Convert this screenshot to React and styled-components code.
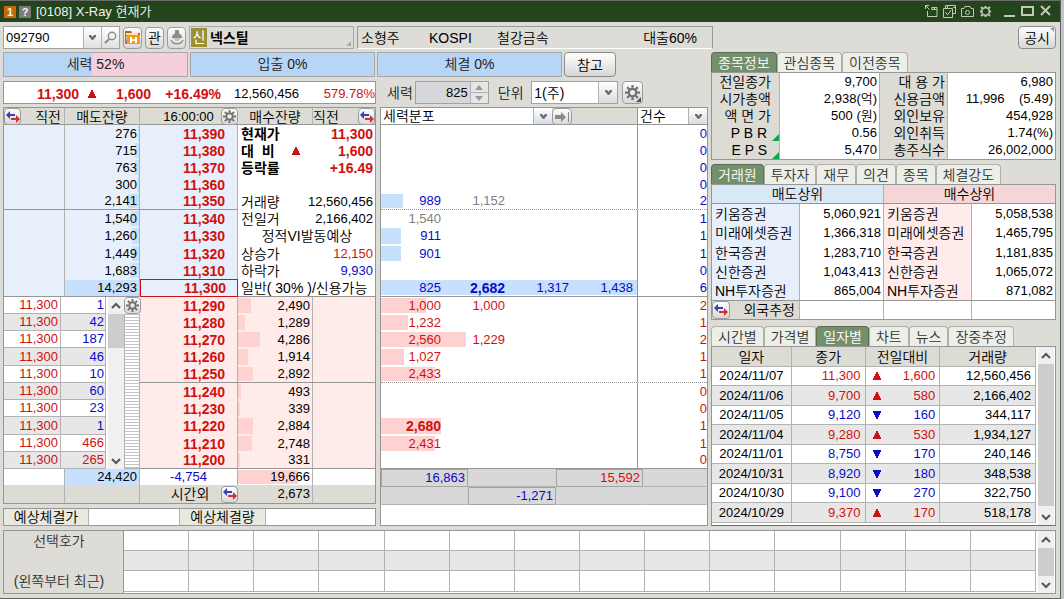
import React from "react";
import styled, { createGlobalStyle, css } from "styled-components";

const RED = "#d01010";
const BLUE = "#0a0ac8";
const GRAY = "#808080";
const LINE = "#b2b2b2";
const EDGE = "#969696";
const PAPER = "#dddcd6";
const HEAD = "#dcdcd4";
const ASK = "#e7effb";
const BID = "#ffebea";
const ASK_BAR = "#c6e0fe";
const BID_BAR = "#ffd2d2";
const THIN = 350;

const GlobalStyle = createGlobalStyle`
  * {
    box-sizing: border-box;
  }
  body {
    margin: 0;
    background: ${PAPER};
    color: #000;
    font-family: "Liberation Sans", "Noto Sans CJK KR", sans-serif;
    font-size: 13px;
    font-weight: ${THIN};
    line-height: 16px;
  }
  button, input, select {
    margin: 0;
    padding: 0;
    color: inherit;
    font: inherit;
  }
  table {
    border-collapse: collapse;
  }
`;

/* ---------- window ---------- */

const Window = styled.div`
  display: flex;
  flex-direction: column;
  min-height: 100vh;
  margin-right: 3px;
  border-right: 1px solid #5c5f66;
  border-bottom: 1px solid #66665f;
  box-shadow: 3px 0 0 #c3c6c9;
  background: ${PAPER};
`;

const TitleBar = styled.header`
  display: flex;
  align-items: center;
  gap: 3px;
  height: 22px;
  padding: 0 7px 0 4px;
  border-top: 1px solid #6c6c6c;
  background: #24441b;
  color: #f2f2ee;
`;

const TitleBadge = styled.span`
  width: 12px;
  height: 12px;
  background: ${({ $bg }) => $bg};
  font-size: 11px;
  font-weight: bold;
  line-height: 12px;
  text-align: center;
`;

const TitleText = styled.h1`
  flex: 1;
  margin: 0 0 0 2px;
  font-size: 13px;
  font-weight: ${THIN};
`;

const TitleButton = styled.button`
  display: flex;
  width: 15px;
  height: 15px;
  border: 0;
  background: none;
  color: #c6c6bd;
`;

const WindowButtons = styled.div`
  display: flex;
  gap: 3px;
  margin-left: 6px;
`;

const Body = styled.div`
  display: flex;
  flex: 1;
  flex-direction: column;
  padding: 4px 4px 4px 3px;
`;

const Main = styled.div`
  display: grid;
  grid-template-columns: 705fr 345fr;
  gap: 3px;
  margin: 3px 0 4px;
`;

const Stack = styled.div`
  display: flex;
  flex-direction: column;
  min-width: 0;
`;

/* ---------- controls ---------- */

const IconButton = styled.button`
  position: relative;
  display: flex;
  flex: none;
  align-items: center;
  justify-content: center;
  width: ${({ $w }) => $w || 17}px;
  height: ${({ $h }) => $h || 17}px;
  border: 1px solid #9c9c9c;
  border-radius: 4px;
  background: linear-gradient(#fdfdfd, #d9d9d9);
  font-size: 14px;
`;

const TextButton = styled.button`
  position: relative;
  height: ${({ $h }) => $h}px;
  padding: 0 ${({ $pad }) => $pad}px;
  border: 1px solid #8c8c8c;
  border-radius: 4px;
  background: linear-gradient(#ffffff, #d6d6d6);
  font-size: 14px;
`;

const Corner = styled.i`
  position: absolute;
  ${({ $bottom }) => ($bottom ? "bottom: 1px" : "top: 1px")};
  right: 1px;
  ${({ $bottom }) => ($bottom ? "border-bottom: 5px solid #555" : "border-top: 4px solid #999")};
  border-left: ${({ $bottom }) => ($bottom ? 5 : 4)}px solid transparent;
`;

const Toolbar = styled.div`
  display: grid;
  grid-template-columns: auto auto auto auto 165fr 356fr 340fr;
  align-items: center;
  gap: 3px;
  height: 23px;
`;

const CodeBox = styled.div`
  display: flex;
  height: 23px;
  border: 1px solid #a2a2a2;
  background: #fff;
`;

const CodeInput = styled.input`
  width: 79px;
  padding-left: 2px;
  border: 0;
  outline: 0;
  background: #fff;
`;

const InnerButton = styled.button`
  display: flex;
  align-items: center;
  justify-content: center;
  width: 18px;
  border: 0;
  border-left: 1px solid ${LINE};
  background: linear-gradient(#fff, #e0e0e0);
`;

const NameBox = styled.div`
  position: relative;
  display: flex;
  align-items: center;
  gap: 3px;
  height: 23px;
  padding-left: 1px;
  border: 1px solid #aaa;
  font-size: 14px;
  font-weight: bold;
`;

const NameBadge = styled.span`
  width: 16px;
  height: 19px;
  background: #9b9033;
  color: #fff;
  font-weight: normal;
  line-height: 18px;
  text-align: center;
`;

const Grip = styled.i`
  position: absolute;
  right: 2px;
  bottom: 2px;
  border-bottom: 5px solid #aaa;
  border-left: 5px solid transparent;
`;

const MarketBox = styled.div`
  display: grid;
  grid-template-columns: 68fr 68fr 110fr 90fr;
  align-items: center;
  height: 23px;
  padding: 0 15px 0 3px;
  border: 1px solid #999;
  border-bottom-color: #fff;
  font-size: 14px;

  span:last-child {
    text-align: right;
  }
`;

const ToolbarEnd = styled.div`
  display: flex;
  justify-content: flex-end;
`;

const PowerRow = styled.div`
  display: grid;
  grid-template-columns: 185fr 185fr 185fr 52px 90fr;
  gap: 2px;
  height: 25px;
`;

const Power = styled.div`
  border: 1px solid #a8a8a8;
  background: ${({ $split }) =>
    $split ? `linear-gradient(to right, #b7d5f4 ${$split}%, #f5d0dc ${$split}%)` : "#b7d5f4"};
  color: #222;
  font-size: 14px;
  line-height: 23px;
  text-align: center;
`;

/* ---------- shared table parts ---------- */

const Panel = styled.section`
  border: 1px solid ${EDGE};
  background: #fff;
`;

const Table = styled.table`
  display: block;
  width: 100%;

  thead, tbody, tfoot {
    display: block;
  }
`;

const Row = styled.tr`
  display: grid;
  grid-template-columns: ${({ $cols }) => $cols};
  height: ${({ $h }) => $h || 17}px;
  ${({ $under, $soft }) => $under && css`border-bottom: 1px ${$under} ${$soft ? LINE : EDGE};`}
  background: ${({ $bg }) => $bg || "transparent"};
`;

const cell = css`
  position: relative;
  display: flex;
  isolation: isolate;
  align-items: center;
  justify-content: ${({ $align }) => $align || "flex-end"};
  min-width: 0;
  padding: 0 ${({ $pad }) => $pad ?? 2}px;
  ${({ $line }) => $line && css`border-right: 1px solid ${LINE};`}
  background: ${({ $bg }) => $bg || "transparent"};
  color: ${({ $color }) => $color || "inherit"};
  font-size: ${({ $ko, $bold }) => ($ko || $bold ? 14 : 13)}px;
  font-weight: ${({ $bold }) => ($bold ? "bold" : THIN)};
  white-space: pre;
`;

const Td = styled.td`${cell}`;
const Th = styled.th`${cell}`;

const PriceTd = styled(Td)`
  padding-right: 12px;
  ${({ $current }) => $current && css`
    padding-right: 11px;
    border: 1px solid ${RED};
  `}
`;

const Bar = styled.i`
  position: absolute;
  z-index: -1;
  top: 1px;
  bottom: 1px;
  ${({ $side }) => $side || "left"}: 0;
  background: ${({ $color }) => $color};
`;

/* ---------- order book ---------- */

const Columns = styled.div`
  display: grid;
  grid-template-columns: 373fr 328fr;
  gap: 4px;
  margin-top: 4px;
`;

const PriceStrip = styled.div`
  display: grid;
  grid-template-columns: 75fr 17fr 55fr 70fr 78fr 76fr;
  align-items: end;
  height: 23px;
  border: 1px solid ${EDGE};
  background: #fff;
  color: ${RED};
  line-height: 18px;
  text-align: right;

  b {
    font-size: 14px;
    font-weight: bold;
  }
`;

const BookPanel = styled(Panel)`
  margin: 3px 0 4px;
`;

const BookHead = styled.div`
  display: grid;
  grid-template-columns: 61fr 75fr 98fr 75fr 62fr;
  height: 17px;
  border-bottom: 1px solid ${EDGE};
  background: ${HEAD};
  font-size: 14px;
`;

const HeadCell = styled.div`
  display: flex;
  align-items: center;
  justify-content: ${({ $align }) => $align || "center"};
  padding-right: ${({ $padRight }) => $padRight || 0}px;
  ${({ $line }) => $line && css`border-right: 1px solid ${LINE};`}
  font-size: ${({ $small }) => ($small ? 13 : 14)}px;
`;

const BookTop = styled.div`
  display: grid;
  grid-template-columns: 234fr 137fr;
`;

const BookBottom = styled.div`
  display: grid;
  grid-template-columns: 102fr 18px 16px 235fr;
`;

const Rail = styled.div`
  display: flex;
  flex-direction: column;
  border-bottom: 1px solid ${LINE};
`;

const Stripes = styled.div`
  flex: 1;
  border-right: 1px solid ${LINE};
  border-left: 1px solid ${LINE};
  background: repeating-linear-gradient(#c4c4c4 0 1px, #fff 1px 3px);
`;

const Ko = styled.span`
  font-size: 14px;
`;

const Value = styled.span`
  color: ${({ $color }) => $color || "inherit"};
`;

const InfoRow = styled.div`
  display: flex;
  align-items: center;
  justify-content: ${({ $center }) => ($center ? "center" : "flex-start")};
  height: ${({ $h }) => $h}px;
  padding: 0 2px 0 3px;
  font-size: ${({ $bold }) => ($bold ? 14 : 13)}px;
  font-weight: ${({ $bold }) => ($bold ? "bold" : THIN)};
  white-space: pre;
  ${({ $under }) => $under && css`border-bottom: 1px solid ${EDGE};`}

  ${Ko} {
    min-width: 51px;
  }
  ${Value} {
    flex: 1;
    text-align: right;
  }
`;

const Expected = styled.dl`
  display: grid;
  grid-template-columns: 85fr 91fr 86fr 109fr;
  height: 18px;
  margin: 0;
  border: 1px solid ${EDGE};
  background: #fff;
  font-size: 14px;

  dt {
    border-right: 1px solid ${LINE};
    background: #e8e9e1;
    text-align: center;
  }
  dd {
    margin: 0;
    border-right: 1px solid ${LINE};
  }
  dd:last-child {
    border: 0;
  }
`;

/* ---------- distribution ---------- */

const Controls = styled.div`
  display: flex;
  align-items: center;
  height: 23px;
  padding-left: 7px;
  color: #222;

  label {
    font-size: 14px;
  }
`;

const Spin = styled.div`
  display: flex;
  width: 74px;
  height: 23px;
  margin: 0 9px 0 2px;
  border: 1px solid #a2a2a2;
  background: #d6d8dc;

  input {
    width: 54px;
    padding-right: 2px;
    border: 0;
    background: none;
    color: #000;
    text-align: right;
  }
`;

const SpinButtons = styled.div`
  display: flex;
  flex: 1;
  flex-direction: column;
  border-left: 1px solid ${LINE};

  button {
    display: flex;
    flex: 1;
    align-items: center;
    justify-content: center;
    border: 0;
    background: #e6e6e6;
  }
  button + button {
    border-top: 1px solid ${LINE};
  }
`;

const SelectBox = styled.div`
  position: relative;
  display: flex;
  flex: ${({ $flex }) => $flex || "none"};
  width: ${({ $w }) => ($w ? `${$w}px` : "auto")};
  min-width: 0;
  height: ${({ $h }) => $h}px;
  border: ${({ $h }) => ($h > 20 ? "1px solid #a2a2a2" : "0")};
  background: #fff;

  select {
    width: 100%;
    padding: 0 20px 0 2px;
    border: 0;
    outline: 0;
    appearance: none;
    background: transparent;
    color: #000;
    font-size: 14px;
  }
`;

const SelectArrow = styled.span`
  position: absolute;
  top: 0;
  right: 0;
  bottom: 0;
  display: flex;
  align-items: center;
  justify-content: center;
  width: 19px;
  border-left: 1px solid ${LINE};
  background: linear-gradient(#fff, ${({ $tint }) => $tint || "#dcdcdc"});
  pointer-events: none;
`;

const FlowPanel = styled(Panel)`
  flex: 1;
  margin-top: 3px;
`;

const FlowHead = styled.div`
  display: grid;
  grid-template-columns: 257fr 69fr;
  height: 17px;
  border-bottom: 1px solid ${EDGE};
  background: ${HEAD};
`;

const FlowHeadCell = styled.div`
  display: flex;
  border-right: ${({ $line }) => ($line ? `1px solid ${EDGE}` : "0")};
`;

const FlowTd = styled(Td)`
  justify-content: flex-start;
  padding: 0;
  border-right: 1px solid ${EDGE};
`;

const FlowNumber = styled.span`
  width: 25%;
  padding-right: 4px;
  color: ${({ $color }) => $color};
  font-size: ${({ $bold }) => ($bold ? 14 : 13)}px;
  font-weight: ${({ $bold }) => ($bold ? "bold" : THIN)};
  text-align: right;
`;

const SumRow = styled.div`
  display: grid;
  grid-template-columns: 87fr 88fr 87fr 64fr;
  height: ${({ $h }) => $h}px;
  background: #d8d8d8;
`;

const Sum = styled.div`
  padding-right: 2px;
  border: 1px solid #d8d8d8;
  border-bottom-color: ${LINE};
  ${({ $box }) => $box && css`border-color: #a4a4a4;`}
  color: ${({ $color }) => $color};
  text-align: right;
`;

/* ---------- right column ---------- */

const Tabs = styled.div`
  display: flex;
  height: 20px;
  margin-top: ${({ $top }) => $top || 0}px;
`;

const Tab = styled.button`
  height: 20px;
  padding: 0 6px;
  border: 1px solid #aeb0a8;
  border-bottom: 0;
  border-radius: 4px 4px 0 0;
  background: #ebefe8;
  color: #333;
  font-size: 14px;
  line-height: 18px;
  white-space: nowrap;

  &[aria-selected="true"] {
    border-color: #5d6b57;
    background: #74906b;
    color: #fff;
  }
`;

const Mark = styled.i`
  position: absolute;
  right: 0;
  bottom: 0;
  border-bottom: 7px solid #0aa650;
  border-left: 7px solid transparent;
`;

const DailyPanel = styled(Panel)`
  display: grid;
  flex: 1;
  grid-template-columns: 1fr 18px;
  padding-right: 1px;
  border-bottom-color: #6e6e6e;
`;

const DiffTd = styled(Td)`
  justify-content: space-between;
  padding: 0 4px 0 7px;
`;

const ForeignLabel = styled(Td)`
  justify-content: space-between;
  padding: 0 4px 0 0;
`;

/* ---------- scrollbar ---------- */

const ScrollTrack = styled.div`
  display: flex;
  flex-direction: column;
  width: 16px;
  margin-left: 2px;
  background: #f0f0f0;

  button {
    display: flex;
    flex: none;
    align-items: center;
    justify-content: center;
    height: 17px;
    border: 0;
    background: none;
  }
`;

const ScrollSpace = styled.div`
  flex: 1;
`;

const ScrollThumb = styled.div`
  background: #cdcdcd;
`;

/* ---------- bottom ---------- */

const PickPanel = styled(Panel)`
  display: grid;
  grid-template-columns: 120px 1fr 18px;
  height: 64px;
  padding-right: 1px;
`;

const PickLabel = styled.div`
  display: flex;
  flex-direction: column;
  align-items: center;
  justify-content: space-between;
  padding: 2px 9px 4px 0;
  border-right: 1px solid ${EDGE};
  background: ${PAPER};
  color: #333;
  font-size: 14px;
`;

/* ---------- icons ---------- */

const Chevron = ({ up, size = 10 }) => (
  <svg width={size} height={size} viewBox="0 0 10 10" fill="none" stroke="#555" strokeWidth="2">
    <path d={up ? "M1 7l4-4 4 4" : "M1 3l4 4 4-4"} />
  </svg>
);

const SmallArrow = () => (
  <svg width="7" height="5" viewBox="0 0 7 5">
    <path d="M0 0h2l1.5 2L5 0h2v1.5L4 5H3L0 1.5z" fill="#6b6b6b" />
  </svg>
);

const Swap = () => (
  <svg width="14" height="12" viewBox="0 0 14 12">
    <path d="M0 4l4-4v3h5v2H4v3z" fill="#3c3cc0" />
    <path d="M14 8l-4-4v3H5v2h5v3z" fill="#d03232" />
  </svg>
);

const Gear = ({ size = 13, color = "#707070" }) => (
  <svg width={size} height={size} viewBox="0 0 16 16" fill="none" stroke={color}>
    <circle cx="8" cy="8" r="4" strokeWidth="2.4" />
    <path
      d="M8 0v3M8 13v3M0 8h3M13 8h3M2.3 2.3l2.2 2.2M11.5 11.5l2.2 2.2M2.3 13.7l2.2-2.2M11.5 4.5l2.2-2.2"
      strokeWidth="2.4"
    />
  </svg>
);

const Triangle = ({ down }) => (
  <svg width="8" height="8" viewBox="0 0 8 8">
    {down ? (
      <path d="M0 0h8v2H7v2H6v2H5v2H3V6H2V4H1V2H0z" fill={BLUE} />
    ) : (
      <path d="M3 0h2v2h1v2h1v2h1v2H0V6h1V4h1V2h1z" fill={RED} />
    )}
  </svg>
);

const SearchIcon = () => (
  <svg width="13" height="13" viewBox="0 0 13 13" fill="none" stroke="#888">
    <circle cx="8" cy="5" r="3.7" strokeWidth="1.4" />
    <path d="M5.2 8L1 12" strokeWidth="2" />
  </svg>
);

const FolderIcon = () => (
  <svg width="15" height="14" viewBox="0 0 15 14">
    <path d="M0 0h6l1 2h8v3H0z" fill="#b9651a" />
    <path d="M1 2h12v2H1z" fill="#ffe2a6" />
    <path d="M0 4h1l1 9h-1L0 12z" fill="#b9651a" />
    <path d="M2 4h13v9H2z" fill="#f09a1e" />
    <path d="M6 6v6M11 6v6M6 9h5" stroke="#fff" strokeWidth="2" />
  </svg>
);

const BellIcon = () => (
  <svg width="14" height="16" viewBox="0 0 14 16">
    <path d="M5 0h4v3l3 3v2H2V6l3-3z" fill="#8c8f8c" />
    <path d="M4 8h6v1l-2 2H6L4 9z" fill="#c2c5bf" />
    <path d="M1 10c2 5 10 5 12 0" fill="none" stroke="#8c8f8c" strokeWidth="1.5" />
  </svg>
);

const GoIcon = () => (
  <svg width="15" height="10" viewBox="0 0 15 10">
    <path d="M0 3h6V0l5 5-5 5V7H0z" fill="#8a8a8a" />
    <path d="M13.5 0v10" stroke="#8a8a8a" />
  </svg>
);

const titleIcons = [
  ["분리", <path key="p" d="M1.5 5V1.5H5M1.5 1.5l4 4M8 3.5h5v9H3.5V7M8 5.5h5M8 3v3M10.5 3v3" />],
  ["복사", <path key="p" d="M3.5 4V1.5h10v8H11M5.5 1v3M11 3.5h2M1.5 4.5h9v9h-9zM3.5 8l2 3 3.5-5" />],
  [
    "화면 저장",
    <g key="p">
      <path d="M1.5 4.5H4l1-2h5l1 2h2.5v8h-12z" />
      <circle cx="7.5" cy="8.5" r="2" />
    </g>,
  ],
  [
    "설정",
    <g key="p">
      <circle cx="7.5" cy="7.5" r="3.8" strokeWidth="1.6" />
      <path d="M7.5 2v2M7.5 11v2M2 7.5h2M11 7.5h2M3 3l1.4 1.4M10.6 10.6L12 12M3 12l1.4-1.4M10.6 4.4L12 3" strokeWidth="2" />
    </g>,
  ],
];

const windowIcons = [
  ["최소화", <path key="p" d="M2 12h11" strokeWidth="2" />],
  ["최대화", <path key="p" d="M2 3h11v8H2z" strokeWidth="2" />],
  ["닫기", <path key="p" d="M3 2l9 9M12 2l-9 9" strokeWidth="2" />],
];

const TitleIcon = ({ label, children }) => (
  <TitleButton aria-label={label}>
    <svg width="15" height="15" viewBox="0 0 15 15" fill="none" stroke="currentColor">
      {children}
    </svg>
  </TitleButton>
);

/* ---------- data ---------- */

const MAX = 14293;
const bar = (v) => ({ width: `${(v / MAX) * 100}%` });

const asks = [
  { price: "11,390", qty: 276 },
  { price: "11,380", qty: 715 },
  { price: "11,370", qty: 763 },
  { price: "11,360", qty: 300 },
  { price: "11,350", qty: 2141 },
  { price: "11,340", qty: 1540 },
  { price: "11,330", qty: 1260 },
  { price: "11,320", qty: 1449 },
  { price: "11,310", qty: 1683 },
  { price: "11,300", qty: 14293 },
];

const bids = [
  { price: "11,290", qty: 2490 },
  { price: "11,280", qty: 1289 },
  { price: "11,270", qty: 4286 },
  { price: "11,260", qty: 1914 },
  { price: "11,250", qty: 2892 },
  { price: "11,240", qty: 493 },
  { price: "11,230", qty: 339 },
  { price: "11,220", qty: 2884 },
  { price: "11,210", qty: 2748 },
  { price: "11,200", qty: 331 },
];

const trades = [1, 42, 187, 46, 10, 60, 23, 1, 466, 265];

const askHeight = (i) => (i === 6 || i === 9 ? 18 : 17);
const bidHeight = (i) => (i === 3 || i === 7 ? 18 : 17);

const info = [
  { label: "현재가", value: "11,300", color: RED, bold: true },
  { label: "대  비", value: "1,600", color: RED, bold: true, up: true },
  { label: "등락률", value: "+16.49", color: RED, bold: true },
  {},
  { label: "거래량", value: "12,560,456" },
  { label: "전일거", value: "2,166,402" },
  { label: "정적VI발동예상", center: true },
  { label: "상승가", value: "12,150", color: RED },
  { label: "하락가", value: "9,930", color: BLUE },
  { label: "일반( 30% )/신용가능" },
];

const flow = [
  { count: 0 },
  { count: 0 },
  { count: 0 },
  { count: 0 },
  { nums: ["989", "1,152"], bar: 22, count: 2, gray: 1 },
  { nums: ["1,540"], count: 1, gray: 0 },
  { nums: ["911"], bar: 20, count: 1 },
  { nums: ["901"], bar: 20, count: 1 },
  { count: 0 },
  { nums: ["825", "2,682", "1,317", "1,438"], bar: 256, count: 6, bold: 1 },
  { nums: ["1,000", "1,000"], bar: 45, count: 2 },
  { nums: ["1,232"], bar: 27, count: 1 },
  { nums: ["2,560", "1,229"], bar: 85, count: 2 },
  { nums: ["1,027"], bar: 23, count: 1 },
  { nums: ["2,433"], bar: 54, count: 1 },
  { count: 0 },
  { count: 0 },
  { nums: ["2,680"], bar: 60, count: 1, bold: 0 },
  { nums: ["2,431"], bar: 54, count: 1 },
  { count: 0 },
];

const stock = [
  ["전일종가", "9,700", "대 용 가", "6,980"],
  ["시가총액", "2,938(억)", "신용금액", "11,996    (5.49)"],
  ["액 면 가", "500 (원)", "외인보유", "454,928"],
  ["P B R ", "0.56", "외인취득", "1.74(%)"],
  ["E P S ", "5,470", "총주식수", "26,002,000"],
];

const brokers = [
  ["키움증권", "5,060,921", "키움증권", "5,058,538"],
  ["미래에셋증권", "1,366,318", "미래에셋증권", "1,465,795"],
  ["한국증권", "1,283,710", "한국증권", "1,181,835"],
  ["신한증권", "1,043,413", "신한증권", "1,065,072"],
  ["NH투자증권", "865,004", "NH투자증권", "871,082"],
];

const days = [
  ["2024/11/07", "11,300", true, "1,600", "12,560,456"],
  ["2024/11/06", "9,700", true, "580", "2,166,402"],
  ["2024/11/05", "9,120", false, "160", "344,117"],
  ["2024/11/04", "9,280", true, "530", "1,934,127"],
  ["2024/11/01", "8,750", false, "170", "240,146"],
  ["2024/10/31", "8,920", false, "180", "348,538"],
  ["2024/10/30", "9,100", false, "270", "322,750"],
  ["2024/10/29", "9,370", true, "170", "518,178"],
];

/* ---------- parts ---------- */

const TabList = ({ items, active, top }) => (
  <Tabs role="tablist" $top={top}>
    {items.map((t) => (
      <Tab key={t} role="tab" aria-selected={t === active}>
        {t}
      </Tab>
    ))}
  </Tabs>
);

const Scrollbar = ({ thumb }) => (
  <ScrollTrack>
    <button aria-label="위로"><Chevron up /></button>
    <ScrollThumb style={{ height: `${thumb}%` }} />
    <ScrollSpace />
    <button aria-label="아래로"><Chevron /></button>
  </ScrollTrack>
);

const Select = ({ label, options, w, h, flex, tint }) => (
  <SelectBox $w={w} $h={h} $flex={flex}>
    <select aria-label={label}>
      {options.map((o) => (
        <option key={o}>{o}</option>
      ))}
    </select>
    <SelectArrow $tint={tint}><SmallArrow /></SelectArrow>
  </SelectBox>
);

const AskTable = () => (
  <Table>
    <tbody>
      {asks.map(({ price, qty }, i) => (
        <Row key={price} $cols="61fr 75fr 98fr" $h={askHeight(i)} $bg={ASK} $under={i % 5 === 4 && "solid"}>
          <Td $line />
          <Td $line>
            <Bar $side="right" $color={ASK_BAR} style={bar(qty)} />
            {qty.toLocaleString("en-US")}
          </Td>
          <PriceTd $line $bold $color={RED} $current={price === "11,300"}>{price}</PriceTd>
        </Row>
      ))}
    </tbody>
  </Table>
);

const InfoList = () => (
  <div>
    {info.map((r, i) => (
      <InfoRow key={i} $h={askHeight(i)} $bold={r.bold} $center={r.center} $under={i === 9}>
        <Ko>{r.label}</Ko>
        {r.up && <Triangle />}
        {r.value && <Value $color={r.color}>{r.value}</Value>}
      </InfoRow>
    ))}
  </div>
);

const TradeTable = () => (
  <Table>
    <tbody>
      {trades.map((qty, i) => (
        <Row key={i} $cols="57fr 45fr" $h={bidHeight(i)} $bg={i % 2 ? "#e7e7e7" : "#fff"} $under="solid" $soft>
          <Td $line $color={RED}>{"11,300"}</Td>
          <Td $line $pad={1} $color={qty > 200 ? RED : BLUE}>{qty}</Td>
        </Row>
      ))}
    </tbody>
  </Table>
);

const BidTable = () => (
  <Table>
    <tbody>
      {bids.map(({ price, qty }, i) => (
        <Row key={price} $cols="98fr 75fr 62fr" $h={bidHeight(i)} $bg={BID} $under={i % 5 === 4 && "solid"}>
          <PriceTd $line $bold $color={RED}>{price}</PriceTd>
          <Td $line>
            <Bar $color={BID_BAR} style={bar(qty)} />
            {qty.toLocaleString("en-US")}
          </Td>
          <Td />
        </Row>
      ))}
    </tbody>
  </Table>
);

const bookCols = "61fr 75fr 98fr 75fr 62fr";

const OrderBook = () => (
  <BookPanel>
    <BookHead>
      <HeadCell $line $align="space-between" $padRight={3}>
        <IconButton aria-label="매도 전환"><Swap /></IconButton>
        직전
      </HeadCell>
      <HeadCell $line>매도잔량</HeadCell>
      <HeadCell $small $align="flex-end">
        16:00:00&nbsp;&nbsp;
        <IconButton aria-label="호가 설정"><Gear /></IconButton>
      </HeadCell>
      <HeadCell $line>매수잔량</HeadCell>
      <HeadCell $align="space-between">
        <span>직전</span>
        <IconButton aria-label="매수 전환"><Swap /></IconButton>
      </HeadCell>
    </BookHead>
    <BookTop>
      <AskTable />
      <InfoList />
    </BookTop>
    <BookBottom>
      <TradeTable />
      <Scrollbar thumb={20} />
      <Rail>
        <IconButton aria-label="체결 설정"><Gear /></IconButton>
        <Stripes />
      </Rail>
      <BidTable />
    </BookBottom>
    <Table>
      <tbody>
        <Row $cols={bookCols} $h={16}>
          <Td $line />
          <Td $line $bg={ASK_BAR}>24,420</Td>
          <Td $line $align="center" $color={BLUE}>-4,754</Td>
          <Td $line>
            <Bar $color={BID_BAR} style={{ width: `${(19666 / 24420) * 100}%` }} />
            19,666
          </Td>
          <Td />
        </Row>
        <Row $cols={bookCols} $h={18} $bg={HEAD}>
          <Td $line />
          <Td $line />
          <Td $ko $pad={0}>
            시간외{"   "}
            <IconButton aria-label="시간외 전환"><Swap /></IconButton>
          </Td>
          <Td $line>2,673</Td>
          <Td />
        </Row>
      </tbody>
    </Table>
  </BookPanel>
);

const Distribution = () => (
  <FlowPanel>
    <FlowHead>
      <FlowHeadCell $line>
        <Select label="분포 항목" options={["세력분포"]} w={171} h={16} tint="#d4dde8" />
        <IconButton aria-label="이동" $w={20}><GoIcon /></IconButton>
      </FlowHeadCell>
      <FlowHeadCell>
        <Select label="건수 항목" options={["건수"]} h={16} flex="1" />
      </FlowHeadCell>
    </FlowHead>
    <Table>
      <tbody>
        {flow.map((r, i) => {
          const color = i < 10 ? BLUE : RED;
          const under = i === 4 || i === 14 ? "dotted" : (i === 9 || i === 19) && "solid";
          return (
            <Row
              key={i}
              $cols="257fr 69fr"
              $h={i < 10 ? askHeight(i) : bidHeight(i - 10)}
              $under={under}
            >
              <FlowTd>
                {r.bar && (
                  <Bar
                    $color={i < 10 ? ASK_BAR : BID_BAR}
                    style={{ width: `${(r.bar / 256) * 100}%` }}
                  />
                )}
                {(r.nums || []).map((n, k) => (
                  <FlowNumber key={k} $color={r.gray === k ? GRAY : color} $bold={r.bold === k}>
                    {n}
                  </FlowNumber>
                ))}
              </FlowTd>
              <Td $pad={0} $color={color}>{r.count}</Td>
            </Row>
          );
        })}
      </tbody>
    </Table>
    <SumRow $h={18}>
      <Sum $box $color={BLUE}>16,863</Sum>
      <Sum />
      <Sum $box $color={RED}>15,592</Sum>
      <Sum />
    </SumRow>
    <SumRow $h={17}>
      <Sum />
      <Sum $box $color={BLUE}>-1,271</Sum>
      <Sum />
      <Sum />
    </SumRow>
  </FlowPanel>
);

const StockInfo = () => (
  <Panel>
    <Table>
      <tbody>
        {stock.map(([a, av, b, bv], i) => (
          <Row key={a} $cols="68fr 100fr 68fr 107fr" $h={i === 4 ? 18 : 17}>
            <Th $line $ko $pad={8} $bg={HEAD}>
              {a}
              {i > 2 && <Mark />}
            </Th>
            <Td $line>{av}</Td>
            <Th $line $ko $pad={2} $bg={HEAD}>{b}</Th>
            <Td>{bv}</Td>
          </Row>
        ))}
      </tbody>
    </Table>
  </Panel>
);

const brokerCols = "88fr 84fr 88fr 83fr";

const Brokers = () => (
  <Panel>
    <Table>
      <thead>
        <Row $cols="172fr 171fr" $h={19} $under="solid">
          <Th $line $ko $align="center" $bg="#d8e8f6">매도상위</Th>
          <Th $ko $align="center" $bg="#f5d6d8">매수상위</Th>
        </Row>
      </thead>
      <tbody>
        {brokers.map(([a, av, b, bv], i) => (
          <Row key={a} $cols={brokerCols} $h={i % 2 ? 20 : 19} $under={i === 4 && "solid"}>
            <Td $line $ko $pad={3} $align="flex-start" $bg={ASK}>{a}</Td>
            <Td $line>{av}</Td>
            <Td $line $ko $pad={3} $align="flex-start" $bg={BID}>{b}</Td>
            <Td>{bv}</Td>
          </Row>
        ))}
        <Row $cols={brokerCols} $h={18}>
          <ForeignLabel $line $ko $bg={HEAD}>
            <IconButton aria-label="외국 전환" $w={18} $h={18}><Swap /></IconButton>
            외국추정
          </ForeignLabel>
          <Td $line />
          <Td $line />
          <Td />
        </Row>
      </tbody>
    </Table>
  </Panel>
);

const dayCols = "80fr 74fr 75fr 96fr";

const Daily = () => (
  <DailyPanel>
    <Table>
      <thead>
        <Row $cols={dayCols} $h={20} $bg={HEAD} $under="solid" $soft>
          {["일자", "종가", "전일대비", "거래량"].map((h) => (
            <Th key={h} $line $ko $align="center">{h}</Th>
          ))}
        </Row>
      </thead>
      <tbody>
        {days.map(([date, close, up, diff, volume], i) => (
          <Row key={date} $cols={dayCols} $h={i % 2 ? 20 : 19} $bg={i % 2 ? "#e7e7e7" : "#fff"} $under="solid" $soft>
            <Td $line $align="center">{date}</Td>
            <Td $line $pad={4} $color={up ? RED : BLUE}>{close}</Td>
            <DiffTd $line $color={up ? RED : BLUE}>
              <Triangle down={!up} />
              {diff}
            </DiffTd>
            <Td $line $pad={4}>{volume}</Td>
          </Row>
        ))}
      </tbody>
    </Table>
    <Scrollbar thumb={80} />
  </DailyPanel>
);

const Picked = () => (
  <PickPanel>
    <PickLabel>
      <span>선택호가</span>
      <span>(왼쪽부터 최근)</span>
    </PickLabel>
    <Table>
      <tbody>
        {[20, 20, 21].map((h, r) => (
          <Row key={r} $cols="repeat(14, 1fr)" $h={h} $bg={r === 1 ? "#e7e7e7" : "#fff"} $under="solid" $soft>
            {Array.from({ length: 14 }, (_, c) => (
              <Td key={c} $line />
            ))}
          </Row>
        ))}
      </tbody>
    </Table>
    <Scrollbar thumb={45} />
  </PickPanel>
);

const App = () => (
  <>
    <GlobalStyle />
    <Window>
      <TitleBar>
        <TitleBadge $bg="#c46a08">1</TitleBadge>
        <TitleBadge $bg="#7a7a7a">?</TitleBadge>
        <TitleText>[0108] X-Ray 현재가</TitleText>
        {titleIcons.map(([label, icon]) => (
          <TitleIcon key={label} label={label}>{icon}</TitleIcon>
        ))}
        <WindowButtons>
          {windowIcons.map(([label, icon]) => (
            <TitleIcon key={label} label={label}>{icon}</TitleIcon>
          ))}
        </WindowButtons>
      </TitleBar>
      <Body>
        <Toolbar>
          <CodeBox>
            <CodeInput aria-label="종목코드" defaultValue="092790" />
            <InnerButton aria-label="최근 종목"><SmallArrow /></InnerButton>
            <InnerButton aria-label="종목 검색"><SearchIcon /></InnerButton>
          </CodeBox>
          <IconButton aria-label="보유 종목" $w={19} $h={22}><FolderIcon /></IconButton>
          <IconButton $w={19} $h={22}>관</IconButton>
          <IconButton aria-label="알림" $w={19} $h={22}><BellIcon /></IconButton>
          <NameBox>
            <NameBadge>신</NameBadge>
            넥스틸
            <Grip />
          </NameBox>
          <MarketBox>
            <span>소형주</span>
            <span>KOSPI</span>
            <span>철강금속</span>
            <span>대출60%</span>
          </MarketBox>
          <ToolbarEnd>
            <TextButton $h={23} $pad={5}>
              공시
              <Corner />
            </TextButton>
          </ToolbarEnd>
        </Toolbar>
        <Main>
          <Stack>
            <PowerRow>
              <Power $split={48}>세력 52%</Power>
              <Power>입출 0%</Power>
              <Power>체결 0%</Power>
              <TextButton $h={25} $pad={0}>참고</TextButton>
            </PowerRow>
            <Columns>
              <Stack>
                <PriceStrip>
                  <b>11,300</b>
                  <span><Triangle /></span>
                  <b>1,600</b>
                  <b>+16.49%</b>
                  <Value $color="#000">12,560,456</Value>
                  <span>579.78%</span>
                </PriceStrip>
                <OrderBook />
                <Expected>
                  <dt>예상체결가</dt>
                  <dd />
                  <dt>예상체결량</dt>
                  <dd />
                </Expected>
              </Stack>
              <Stack>
                <Controls>
                  <label htmlFor="power">세력</label>
                  <Spin>
                    <input id="power" defaultValue="825" />
                    <SpinButtons>
                      <button aria-label="증가">
                        <svg width="8" height="5" viewBox="0 0 8 5"><path d="M0 5l4-5 4 5z" fill="#999" /></svg>
                      </button>
                      <button aria-label="감소">
                        <svg width="8" height="5" viewBox="0 0 8 5"><path d="M0 0l4 5 4-5z" fill="#999" /></svg>
                      </button>
                    </SpinButtons>
                  </Spin>
                  <Ko>단위&nbsp;&nbsp;</Ko>
                  <Select label="단위" options={["1(주)"]} w={87} h={23} />
                  <Ko>&nbsp;</Ko>
                  <IconButton aria-label="분포 설정" $w={21} $h={23}>
                    <Gear size={15} />
                    <Corner $bottom />
                  </IconButton>
                </Controls>
                <Distribution />
              </Stack>
            </Columns>
          </Stack>
          <Stack>
            <TabList items={["종목정보", "관심종목", "이전종목"]} active="종목정보" />
            <StockInfo />
            <TabList
              items={["거래원", "투자자", "재무", "의견", "종목", "체결강도"]}
              active="거래원"
              top={4}
            />
            <Brokers />
            <TabList
              items={["시간별", "가격별", "일자별", "차트", "뉴스", "장중추정"]}
              active="일자별"
              top={6}
            />
            <Daily />
          </Stack>
        </Main>
        <Picked />
      </Body>
    </Window>
  </>
);

export default App;
